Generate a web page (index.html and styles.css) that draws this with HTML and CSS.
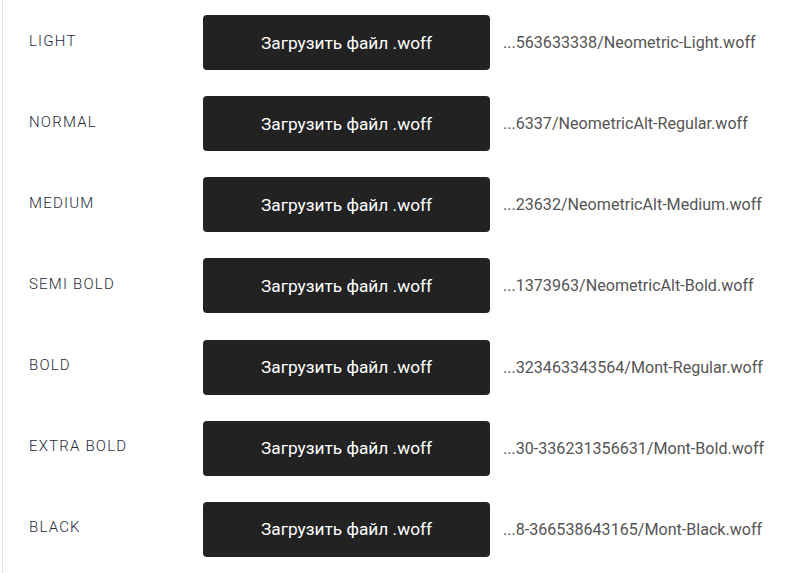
FILE: index.html
```html
<!DOCTYPE html>
<html lang="ru">
<head>
    <meta charset="UTF-8">
    <meta name="viewport" content="width=device-width, initial-scale=1.0">
    <title>Шрифты</title>
    <link rel="stylesheet" href="styles.css">
</head>
<body>
    <div class="fonts">
        <div class="font-row">
            <div class="font-label">Light</div>
            <button class="upload-btn">Загрузить файл .woff</button>
            <div class="font-path">...563633338/Neometric-Light.woff</div>
        </div>
        <div class="font-row">
            <div class="font-label">Normal</div>
            <button class="upload-btn">Загрузить файл .woff</button>
            <div class="font-path">...6337/NeometricAlt-Regular.woff</div>
        </div>
        <div class="font-row">
            <div class="font-label">Medium</div>
            <button class="upload-btn">Загрузить файл .woff</button>
            <div class="font-path">...23632/NeometricAlt-Medium.woff</div>
        </div>
        <div class="font-row">
            <div class="font-label">Semi bold</div>
            <button class="upload-btn">Загрузить файл .woff</button>
            <div class="font-path">...1373963/NeometricAlt-Bold.woff</div>
        </div>
        <div class="font-row">
            <div class="font-label">Bold</div>
            <button class="upload-btn">Загрузить файл .woff</button>
            <div class="font-path">...323463343564/Mont-Regular.woff</div>
        </div>
        <div class="font-row">
            <div class="font-label">Extra bold</div>
            <button class="upload-btn">Загрузить файл .woff</button>
            <div class="font-path">...30-336231356631/Mont-Bold.woff</div>
        </div>
        <div class="font-row">
            <div class="font-label">Black</div>
            <button class="upload-btn">Загрузить файл .woff</button>
            <div class="font-path">...8-366538643165/Mont-Black.woff</div>
        </div>
    </div>
</body>
</html>
```

FILE: styles.css
```css
body {
    margin: 0;
    font-family: Roboto, "Noto Sans", sans-serif;
    background: #fff;
}
.fonts {
    margin-left: 2px;
    border-left: 1px solid #e4e4e4;
    padding: 15px 0 16px 26px;
    display: flex;
    flex-direction: column;
    gap: 26.17px;
}
.font-row {
    display: flex;
    align-items: center;
}
.font-label {
    width: 174px;
    font-size: 15px;
    font-weight: 300;
    letter-spacing: 1.2px;
    text-transform: uppercase;
    color: #1e2a3a;
    padding-bottom: 4px;
}
.upload-btn {
    width: 287px;
    height: 55px;
    border: none;
    border-radius: 4px;
    background: #222;
    color: #fff;
    font-family: inherit;
    font-size: 17.3px;
    cursor: pointer;
    padding: 0;
}
.font-path {
    margin-left: 13px;
    font-size: 16.1px;
    color: #555;
    white-space: nowrap;
}
```
